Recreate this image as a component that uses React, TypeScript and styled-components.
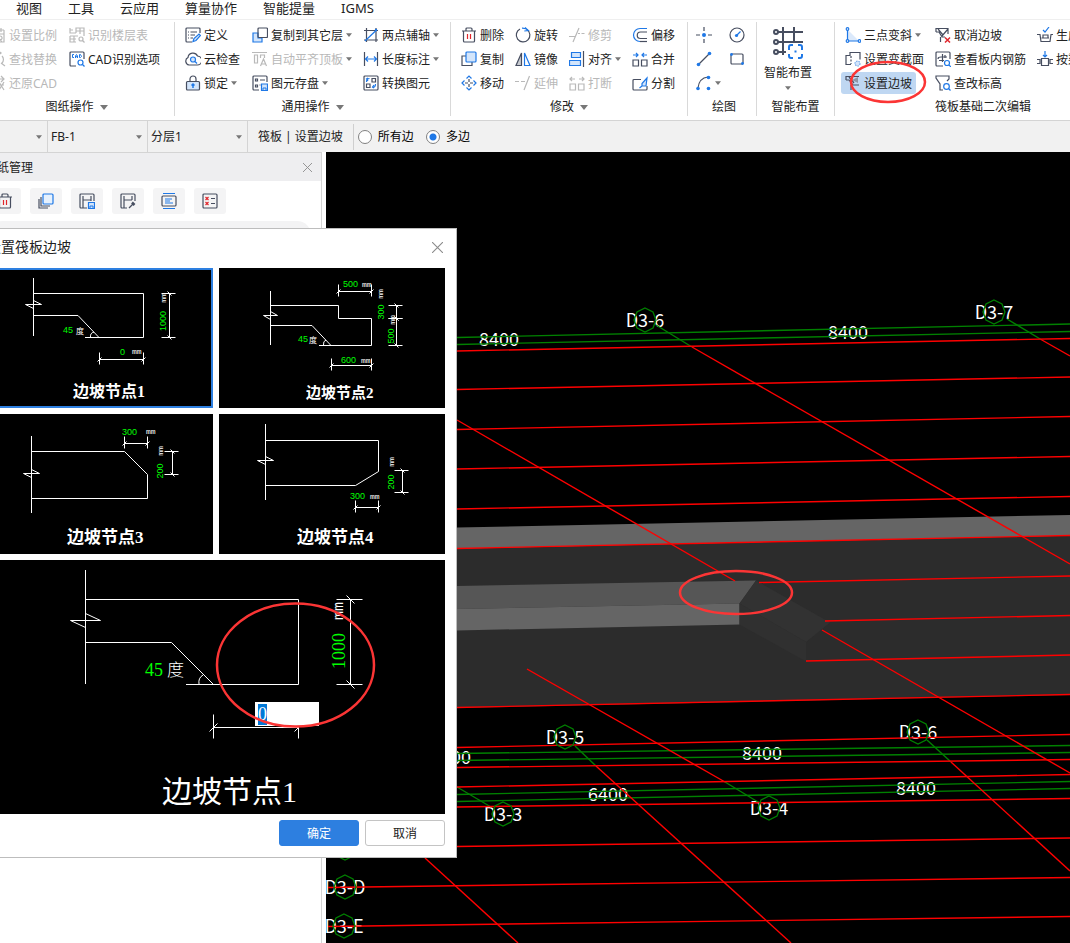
import React, { useEffect, useRef, useState } from "react";
import styled, { createGlobalStyle } from "styled-components";

const INK = "#474e60";
const BLUE = "#1f78e6";
const PALE = "#d3e5fb";
const MUTED = "#b9b9b9";
const RED = "#e0262c";
const UI_FONT = `"Noto Sans", "Noto Sans CJK SC", sans-serif`;

const GlobalStyle = createGlobalStyle`
  * { box-sizing: border-box; }
  body { margin: 0; background: #fff; overflow: hidden; }
  button, input, select { font: inherit; color: inherit; }
`;

/* ---------- shell ---------- */

const Viewport = styled.div`
  height: 100vh;
  overflow: hidden;
  font-family: ${UI_FONT};
  font-size: 12px;
  color: #222;
`;

const Shell = styled.div`
  height: 100%;
  margin-left: -25px;
  display: flex;
  flex-direction: column;
`;

const MenuBar = styled.nav`
  display: flex;
  gap: 26px;
  height: 20px;
  padding-left: 41px;
  border-bottom: 1px solid #efefef;
  flex-shrink: 0;
`;

const MenuItem = styled.button`
  border: 0;
  padding: 0;
  background: none;
  font-size: 13px;
  line-height: 16px;
  height: 16px;
  white-space: nowrap;
`;

/* ---------- ribbon ---------- */

const Ribbon = styled.div`
  display: flex;
  padding: 2px 0 4px 4px;
  border-bottom: 1px solid #d4d4d4;
  flex-shrink: 0;
`;

const Group = styled.section<{ $width: number; $pad?: number }>`
  flex: 0 0 ${(p) => p.$width}px;
  padding: 1px 0 0 ${(p) => p.$pad ?? 0}px;
  border-right: 1px solid #d9d9d9;
`;

const CommandGrid = styled.div<{ $cols: string }>`
  display: grid;
  grid-template-columns: ${(p) => p.$cols};
  grid-auto-flow: column;
  grid-template-rows: repeat(3, 24px);
  align-items: center;
  justify-items: start;
`;

const GroupLabel = styled.div<{ $pad?: number }>`
  display: flex;
  align-items: center;
  justify-content: center;
  gap: 6px;
  margin-left: -${(p) => p.$pad ?? 0}px;
  padding-top: 3px;
  line-height: 18px;
`;

const CommandButton = styled.button<{ $active?: boolean }>`
  position: relative;
  display: flex;
  align-items: center;
  gap: 3px;
  height: 22px;
  padding: 0 4px;
  border: 0;
  border-radius: 3px;
  background: ${(p) => (p.$active ? "#bfd7f2" : "none")};
  white-space: nowrap;
  &:disabled { color: #b8b8b8; }
`;

const BigButton = styled.button`
  display: flex;
  flex-direction: column;
  align-items: center;
  width: 62px;
  height: 72px;
  padding: 3px 0 0;
  border: 0;
  background: none;
  line-height: 26px;
`;

const Glyph = styled.svg`
  display: block;
  flex-shrink: 0;
  fill: none;
  stroke: ${INK};
  stroke-width: 1.2;
`;

const Triangle = styled.svg`
  display: block;
  flex-shrink: 0;
  fill: #777;
`;

const Ring = styled.svg`
  position: absolute;
  left: 8px;
  top: -12px;
  z-index: 1;
  fill: none;
  stroke: #fb3535;
  stroke-width: 2.5;
  pointer-events: none;
`;

const Caret = ({ big }: { big?: boolean }) => (
  <Triangle width={big ? 8 : 6} height={big ? 5 : 4} viewBox="0 0 8 5">
    <path d="M0 0h8L4 5z" />
  </Triangle>
);

const pen = { stroke: BLUE };
const off = { stroke: MUTED };

const icons: Record<string, React.ReactNode> = {
  scale: (
    <g {...off}>
      <path d="M1 3h13M3 1v4M7 1v3M11 1v4M14 3v4M2 7h12v8H2zM8 10l4 5M10 9a2 2 0 1 0 .1 0" />
    </g>
  ),
  find: (
    <g {...off}>
      <path d="M10 2a6 6 0 1 0-1 12M8 0l3 2-3 2M12 5a5 5 0 0 1 0 7M11 12l4 3" />
    </g>
  ),
  restore: (
    <g {...off}>
      <path d="M2 4h12M11 1l3 3-3 3M14 10H3M6 7l-4 3 4 3M9 7l5 8M14 7l-5 8" />
    </g>
  ),
  floors: (
    <g {...off}>
      <path d="M1 1v5h6M1 3h3M7 6V1h8v8M7 4h8M11 1v6M1 9v6h6M1 12h6M5 9v6M1 9h8" />
      <circle cx="12" cy="12" r="2" />
      <path d="M13.500 13.500l2 2" />
    </g>
  ),
  cad: (
    <>
      <path d="M7 15H2a1 1 0 0 1-1-1V2a1 1 0 0 1 1-1h12a1 1 0 0 1 1 1v6" />
      <path
        {...pen}
        strokeWidth="1"
        d="M5 3.500H3.500v3H5M6.500 7V5L7.500 3.500L8.500 5v2M6.500 5.700h2M10.500 3.500v3h1L12.500 5.500L11.500 3.500z"
      />
      <circle {...pen} cx="11.500" cy="11.500" r="2.500" />
      <path {...pen} d="M13.500 13.500L15.500 15.500" />
    </>
  ),
  define: (
    <>
      <path d="M15 6V2a1 1 0 0 0-1-1H2a1 1 0 0 0-1 1v12a1 1 0 0 0 1 1h5" />
      <path d="M3 5h1M5.500 5H12M3 8h1M5.500 8H10M3 11h1M5.500 11H8" />
      <path {...pen} fill={PALE} d="M8 14.500l1-3L14 7l1.500 1.500L11 13.500z" />
    </>
  ),
  cloud: (
    <>
      <path d="M4 14a4 4 0 0 1-1-7.500A5 5 0 0 1 12.500 5 4.500 4.500 0 0 1 12 14z" />
      <circle {...pen} cx="8" cy="8.500" r="2.500" fill={PALE} />
      <path {...pen} d="M10 10.500l2 2" />
    </>
  ),
  lock: (
    <>
      <path d="M5 6V4a3 3 0 0 1 6 0v2" />
      <rect x="1.500" y="6.500" width="13" height="8.500" rx="1" fill={PALE} />
      <path {...pen} strokeWidth="1.500" d="M8 13V9M6.500 10.500L8 9l1.500 1.500" />
    </>
  ),
  copyFloors: (
    <>
      <path {...pen} fill={PALE} d="M6 6H1v9h9v-4H6z" />
      <rect x="6" y="1" width="9.500" height="9.500" rx="1" />
    </>
  ),
  alignTop: (
    <g {...off}>
      <path d="M0 1.500h15M2.500 4h3v8h-3zM8.500 7V4h4v3M8.500 15l3-7 3 7M9.500 13h4" />
    </g>
  ),
  save: (
    <>
      <path d="M7 15H2a1 1 0 0 1-1-1V2a1 1 0 0 1 1-1h12a1 1 0 0 1 1 1v5M3.500 4h2v2h-2zM3.500 10h2v2h-2zM8 5h5M7.500 10h1" />
      <path {...pen} fill={PALE} d="M9.500 9h6v6.500h-6z" />
      <path {...pen} strokeWidth="1" d="M11 15v-2h3v2" />
    </>
  ),
  auxAxis: (
    <>
      <path d="M1 3.500h14M1 13h14M3.500 1v14M13 1v14" />
      <path {...pen} d="M2 14L13.500 3" />
      <circle cx="13" cy="3" r="1.200" fill={BLUE} stroke="none" />
    </>
  ),
  length: (
    <>
      <path d="M1.500 1v14M14.500 1v14" />
      <path {...pen} d="M2 8h12M5 5.500L2.500 8 5 10.500M11 5.500L13.500 8 11 10.500" />
    </>
  ),
  convert: (
    <>
      <rect x="1" y="1" width="14" height="14" rx="1" />
      <path d="M9 3.500h3.500V7H9zM3.500 9H7v3.500H3.500z" />
      <path {...pen} d="M6.500 3.500q-3 0-3 3.500M5 3l-1.500 1L5 6M9.500 12.500q3 0 3-3.500M11 13l-1.500-1L11 10" />
    </>
  ),
  trash: (
    <>
      <path d="M1 4h14M5 4V2q0-1 1-1h4q1 0 1 1v2M2.500 4v10a1 1 0 0 0 1 1h9a1 1 0 0 0 1-1V4" />
      <path stroke={RED} d="M6.500 7v5M9.500 7v5" />
    </>
  ),
  rotate: (
    <>
      <path d="M5 2a6.800 6.800 0 1 0 7 .500" />
      <path {...pen} d="M7 1.200q4-.2 6 2.300M10 0.500l3.300 3-4 .5" />
    </>
  ),
  trim: (
    <g {...off}>
      <path d="M0 9.500h6M10 1L4 15M9 6.500h2M12.500 6.500h3" />
    </g>
  ),
  offset: (
    <>
      <path d="M15 5H8.500a3 3 0 0 0 0 6.500H15" />
      <path {...pen} d="M15 1.500H8a6.500 6.500 0 0 0 0 13" />
      <path d="M8 14.500h7" />
    </>
  ),
  copy: (
    <>
      <path d="M5 5H1v9.500h10V11" />
      <rect {...pen} x="5" y="1" width="10" height="10" rx="1" fill={PALE} />
    </>
  ),
  mirror: (
    <>
      <path d="M6.500 2v12.500H1z" fill="#c9ccd2" />
      <path {...pen} d="M9.500 2v12.500H15z" />
    </>
  ),
  align: (
    <>
      <path {...pen} fill={PALE} d="M2.500 1.500h9v5h-9zM.5 9.500h11v5H.5z" />
      <path d="M14.500 0v16" />
    </>
  ),
  merge: (
    <>
      <path d="M1 9h5.500v6H1zM9.500 9H15v6H9.500z" />
      <path {...pen} d="M1 4h5M4 2l2 2-2 2M15 4h-5M12 2l-2 2 2 2" />
    </>
  ),
  move: (
    <>
      <path d="M8 4v3M8 9v3M4 8h3M9 8h3" />
      <path {...pen} d="M5.500 3.500L8 1l2.500 2.500M5.500 12.500L8 15l2.500-2.500M3.500 5.500L1 8l2.500 2.500M12.500 5.500L15 8l-2.500 2.500" />
    </>
  ),
  extend: (
    <g {...off}>
      <path d="M0 6.500h4M6 6.500h4M14.500 1L9 15M12 6.500h1" />
    </g>
  ),
  breakApart: (
    <g {...off}>
      <path d="M1 9h5.500v6H1zM9.500 9H15v6H9.500zM1 4h5M3 2L1 4l2 2M15 4h-5M13 2l2 2-2 2" />
    </g>
  ),
  split: (
    <>
      <path d="M9 4.500H2a1 1 0 0 0-1 1V14a1 1 0 0 0 1 1h12a1 1 0 0 0 1-1v-3" />
      <path {...pen} fill={PALE} d="M15 3l-5 5.500v2.500h4zM10 11l-2.500 2" />
    </>
  ),
  point: (
    <>
      <path d="M8 0v4M8 12v4M0 8h4M12 8h4" />
      <circle cx="8" cy="8" r="2" fill={BLUE} stroke="none" />
    </>
  ),
  line: (
    <>
      <path d="M3 13L13 3" />
      <g fill={BLUE} stroke="none">
        <circle cx="2.500" cy="13.500" r="1.800" />
        <circle cx="13.500" cy="2.500" r="1.800" />
      </g>
    </>
  ),
  arc: (
    <>
      <path d="M2 13Q3 3 12 2" />
      <g fill={BLUE} stroke="none">
        <circle cx="2" cy="13.500" r="1.800" />
        <circle cx="12.500" cy="2.500" r="1.800" />
        <circle cx="12.500" cy="13.500" r="1.800" />
      </g>
    </>
  ),
  circle: (
    <>
      <circle cx="8" cy="8" r="7" />
      <path {...pen} d="M8 8l3.500-3.500" />
      <circle cx="7.500" cy="8.500" r="1.600" fill={BLUE} stroke="none" />
    </>
  ),
  rect: (
    <>
      <rect x="2" y="3" width="12" height="10" rx="1" />
      <circle cx="2.500" cy="3.500" r="1.400" fill={BLUE} stroke="none" />
      <circle cx="13.500" cy="12.500" r="1.400" fill={BLUE} stroke="none" />
    </>
  ),
  slope: (
    <>
      <path d="M3 3l11 11H3z" fill="#dbe9fb" stroke="none" />
      <path {...pen} d="M2.500 2v12H15" />
      <g fill="#fff" {...pen}>
        <circle cx="2.500" cy="2" r="1.300" />
        <circle cx="2.500" cy="14" r="1.300" />
        <circle cx="14.500" cy="14" r="1.300" />
      </g>
    </>
  ),
  section: (
    <>
      <path d="M6 13.500H1V4.500h4V1.500h10v7" />
      <path d="M6 5v8" strokeDasharray="2 1.500" />
      <circle cx="12.500" cy="12.500" r="2.500" fill={PALE} stroke="#6da4e8" strokeDasharray="1.500 1" />
    </>
  ),
  edge: (
    <>
      <path d="M1 5V1.500h13M1 5h3l4 5h6M6 15v-5M4 2l5 6" />
      <path d="M7 5l6-3v6z" fill="#8e96a6" stroke="none" />
    </>
  ),
  cancelEdge: (
    <>
      <path d="M1 5V1.500h12V7M1 5h3l3 5h3M5.500 15v-5M3 2l5 6M13 2L7 9" />
      <path stroke={RED} strokeWidth="1.500" d="M10 10.500l5 5M15 10.500l-5 5" />
    </>
  ),
  viewRebar: (
    <>
      <path d="M8 15H2a1 1 0 0 1-1-1V2a1 1 0 0 1 1-1h12a1 1 0 0 1 1 1v6M3 8q0-2 3-2h6M7.500 3v8M4 9.500h5M10 4v3" />
      <circle {...pen} cx="12" cy="12" r="2.500" />
      <path {...pen} d="M14 14l2 2" />
    </>
  ),
  level: (
    <>
      <path d="M8 15H5V9L1 3V1h13v3L12 6" />
      <circle {...pen} cx="11.500" cy="11.500" r="2.800" />
      <path {...pen} d="M13.500 13.500L15.500 15.500" />
    </>
  ),
  pit: (
    <>
      <path d="M0 7.500h3L4 14.500h9l1-7h2M4.500 11h7.500M6 11V8h5v3" />
      <path {...pen} d="M6 3l2 2 4-5" />
    </>
  ),
  byBeam: (
    <>
      <path d="M0 8.500h3v4H0M16 8.500h-3v4h3M4.500 7.500h7v7h-7z" />
      <path {...pen} d="M8 0v6M6 4l2 2 2-2" />
    </>
  ),
  stack: (
    <>
      <path d="M1 6v9h9M3 4v9h9" />
      <rect {...pen} x="5" y="1" width="10" height="10" rx="1" fill="#e6f1fd" />
    </>
  ),
  saveSheet: (
    <>
      <path d="M8 15H2a1 1 0 0 1-1-1V2a1 1 0 0 1 1-1h12a1 1 0 0 1 1 1v6M4 3v12M4 7h8M12 3v5" />
      <path {...pen} fill={PALE} d="M9.500 9.500h6v6h-6z" />
      <path {...pen} strokeWidth="1" d="M11 15v-2h3v2" />
    </>
  ),
  pickSheet: (
    <>
      <path d="M7 15H2a1 1 0 0 1-1-1V2a1 1 0 0 1 1-1h12a1 1 0 0 1 1 1v6M4 3v12M4 7h8M12 3v4" />
      <path d="M9 15l4-4" />
      <path d="M12 9.500l2.500 2.500" strokeWidth="2.500" />
    </>
  ),
  bound: (
    <>
      <path {...pen} d="M2 .500h12M2 15.500h12M4 6h7M4 8h5M4 10h8" />
      <rect x="1" y="3" width="14" height="10" rx="1" />
    </>
  ),
  checks: (
    <>
      <rect x="1" y="1" width="14" height="14" rx="1" />
      <path d="M9 5.500h4M9 10.500h4" />
      <path stroke={RED} d="M3.500 4l3 3M6.500 4l-3 3M3.500 9l3 3M6.500 9l-3 3" />
    </>
  ),
};

const Icon = ({ name }: { name: string }) => (
  <Glyph width="16" height="16" viewBox="0 0 16 16" aria-hidden="true">
    {icons[name]}
  </Glyph>
);

type Command = {
  icon: string;
  text?: string;
  menu?: boolean;
  disabled?: boolean;
  active?: boolean;
  label?: string;
};

const c = (icon: string, text: string, extra: Partial<Command> = {}): Command => ({ icon, text, ...extra });
const disabled = { disabled: true };
const menu = { menu: true };

const sheetCommands = [
  c("scale", "设置比例", disabled),
  c("find", "查找替换", disabled),
  c("restore", "还原CAD", disabled),
  c("floors", "识别楼层表", disabled),
  c("cad", "CAD识别选项"),
];
const commonCommands = [
  c("define", "定义"),
  c("cloud", "云检查"),
  c("lock", "锁定", menu),
  c("copyFloors", "复制到其它层", menu),
  c("alignTop", "自动平齐顶板", { menu: true, disabled: true }),
  c("save", "图元存盘", menu),
  c("auxAxis", "两点辅轴", menu),
  c("length", "长度标注", menu),
  c("convert", "转换图元"),
];
const modifyCommands = [
  c("trash", "删除"),
  c("copy", "复制"),
  c("move", "移动"),
  c("rotate", "旋转"),
  c("mirror", "镜像"),
  c("extend", "延伸", disabled),
  c("trim", "修剪", disabled),
  c("align", "对齐", menu),
  c("breakApart", "打断", disabled),
  c("offset", "偏移"),
  c("merge", "合并"),
  c("split", "分割"),
];
const drawCommands: Command[] = [
  { icon: "point", label: "点" },
  { icon: "line", label: "直线" },
  { icon: "arc", label: "弧", menu: true },
  { icon: "circle", label: "圆" },
  { icon: "rect", label: "矩形" },
];
const raftCommands = [
  c("slope", "三点变斜", menu),
  c("section", "设置变截面"),
  c("edge", "设置边坡", { active: true }),
  c("cancelEdge", "取消边坡"),
  c("viewRebar", "查看板内钢筋"),
  c("level", "查改标高"),
  c("pit", "生成土方"),
  c("byBeam", "按梁分割"),
];

const Commands = ({ items, cols }: { items: Command[]; cols: string }) => (
  <CommandGrid $cols={cols}>
    {items.map((it) => (
      <CommandButton key={it.icon} disabled={it.disabled} $active={it.active} aria-label={it.label}>
        <Icon name={it.icon} />
        {it.text}
        {it.menu && <Caret />}
        {it.active && (
          <Ring width="78" height="44">
            <ellipse cx="39" cy="22" rx="37" ry="20" />
          </Ring>
        )}
      </CommandButton>
    ))}
  </CommandGrid>
);

/* ---------- option bar ---------- */

const OptionBar = styled.div`
  display: flex;
  align-items: center;
  height: 31px;
  background: #f1f1f1;
  flex-shrink: 0;
`;

const Combo = styled.label<{ $width: number }>`
  display: flex;
  align-items: center;
  width: ${(p) => p.$width}px;
  height: 100%;
  padding-right: 5px;
  border-right: 1px solid #d4d4d4;
  select {
    appearance: none;
    flex: 1;
    min-width: 0;
    height: 100%;
    border: 0;
    padding: 0 3px;
    background: none;
    outline: none;
  }
`;

const Crumb = styled.div`
  height: 26px;
  line-height: 26px;
  padding: 0 10px;
  border-right: 1px solid #cfcfcf;
  white-space: nowrap;
`;

const Choice = styled.label`
  display: flex;
  align-items: center;
  gap: 6px;
  margin-right: 8px;
  padding-left: 4px;
  line-height: 26px;
  white-space: nowrap;
  color: #000;
  input {
    appearance: none;
    width: 14px;
    height: 14px;
    margin: 0;
    border: 1px solid #808080;
    border-radius: 50%;
    background: #fff;
  }
  input:checked {
    background: radial-gradient(circle, ${BLUE} 0 3px, #fff 4px);
  }
`;

/* ---------- work area ---------- */

const Workspace = styled.main`
  position: relative;
  display: flex;
  flex: 1;
  min-height: 0;
  gap: 4px;
`;

const SidePanel = styled.aside`
  flex: 0 0 347px;
  border: solid #d4d4d4;
  border-width: 1px 1px 0 0;
`;

const PanelHeader = styled.header`
  display: flex;
  align-items: center;
  justify-content: space-between;
  height: 28px;
  padding: 0 8px 0 10px;
  background: #eeeef0;
`;

const CloseButton = styled.button`
  display: grid;
  place-items: center;
  padding: 0;
  width: 12px;
  height: 12px;
  border: 0;
  background: none;
  stroke: #8b8b8b;
`;

const PanelTools = styled.div`
  display: flex;
  gap: 9px;
  padding: 7px 0 7px 14px;
`;

const ToolButton = styled.button`
  display: grid;
  place-items: center;
  width: 32px;
  height: 26px;
  padding: 0;
  border: 0;
  border-radius: 3px;
  background: #f4f4f5;
`;

const SearchBox = styled.input`
  display: block;
  width: 322px;
  height: 28px;
  margin-left: 14px;
  border: 0;
  border-radius: 14px;
  background: #f3f3f4;
`;

const Scene = styled.svg`
  flex: 1;
  min-width: 0;
  min-height: 0;
  background: #000;
  font-family: "Noto Sans CJK SC", sans-serif;
  font-size: 18px;
`;

const CloseMark = ({ size }: { size: number }) => (
  <svg width={size} height={size} viewBox="0 0 10 10">
    <path d="M0 0l10 10M10 0L0 10" />
  </svg>
);

type Seg = [number, number, number, number];

const redLines: Seg[] = [
  [457, 351, 1070, 338.5],
  [457, 389.500, 1070, 377],
  [457, 429.500, 1070, 416.500],
  [457, 469, 1070, 456.500],
  [457, 509, 1070, 496.500],
  [457, 548.500, 1070, 535.500],
  [759, 582.500, 1070, 576],
  [825, 621, 1070, 615.500],
  [806, 661, 1070, 655],
  [457, 707.500, 1070, 694.500],
  [457, 747.500, 1070, 734.500],
  [457, 767.500, 1070, 759.500],
  [457, 787, 1070, 774.500],
  [457, 807, 1070, 798.500],
  [457, 846.500, 1070, 838],
  [328, 887.500, 1070, 877.500],
  [328, 926.500, 1070, 916.500],
  [692, 347, 1070, 564],
  [457, 420, 735, 581],
  [1041, 339.500, 1070, 356],
  [822, 630, 1070, 773],
  [527, 669, 725, 782],
  [596, 766, 791, 943],
  [951, 762, 1070, 871],
  [425, 858, 518, 943],
];

const greenLines: Seg[] = [
  [457, 337.500, 1070, 324],
  [457, 344.500, 1070, 331.500],
  [457, 753.500, 1070, 745.500],
  [457, 760.500, 1070, 752.500],
  [457, 794.500, 1070, 781.500],
  [457, 801.500, 1070, 788.500],
  [656, 325, 692, 347],
  [1007, 319, 1041, 339.500],
  [725, 782, 758, 802],
  [575, 746, 596, 766],
  [927, 740, 951, 762],
  [457, 787, 491, 807],
];

const axes: [string, number, number][] = [
  ["D3-6", 645, 320],
  ["D3-7", 994, 312],
  ["D3-5", 565, 737],
  ["D3-6", 918, 732],
  ["D3-3", 503, 814],
  ["D3-4", 769, 808],
  ["D3-D", 345, 887],
  ["D3-E", 344, 926],
  ["D3-C", 345, 848],
];

const spans: [string, number, number][] = [
  ["8400", 499, 346],
  ["8400", 848, 339],
  ["8400", 762, 760],
  ["8400", 916, 795],
  ["6400", 608, 801],
  ["8400", 451, 764],
];

const Lines = ({ segs, color }: { segs: Seg[]; color: string }) => (
  <g stroke={color} strokeWidth="1.400">
    {segs.map(([x1, y1, x2, y2], i) => (
      <line key={i} x1={x1} y1={y1} x2={x2} y2={y2} />
    ))}
  </g>
);

const ModelView = () => (
  <Scene viewBox="326 152 744 791" preserveAspectRatio="xMinYMin slice" role="img" aria-label="三维视图">
    <path d="M457 527.500L1070 515v21L457 549z" fill="#656565" />
    <path d="M457 549L1070 536v159L457 708z" fill="#2c2c2c" />
    <path d="M457 586L756 580.500L739.500 603.500L457 609z" fill="#565656" />
    <path d="M457 609L739.500 603.500v21L457 630.500z" fill="#656565" />
    <path d="M756 580.500L830 622.500L806 642L739.500 603.500z" fill="#323232" />
    <path d="M739.500 603.500L806 642v19.500L739.500 624.500z" fill="#303030" />
    <g fill="#fff" textAnchor="middle">
      {axes.map(([t, x, y]) => (
        <text key={t + x} x={x} y={y + 7}>{t}</text>
      ))}
      {spans.map(([t, x, y]) => (
        <text key={t + x} x={x} y={y}>{t}</text>
      ))}
    </g>
    <Lines segs={greenLines} color="#008000" />
    <Lines segs={redLines} color="#ff0000" />
    <g fill="none" stroke="#008000" strokeWidth="1.300">
      {axes.map(([t, x, y]) => (
        <path key={t + x} d={`M${x} ${y - 12}l8 4l3 8l-3 8l-8 4l-8 -4l-3 -8l3 -8z`} />
      ))}
    </g>
    <ellipse cx="736" cy="592.500" rx="56" ry="21.500" fill="none" stroke="#fb3535" strokeWidth="2.500" />
  </Scene>
);

/* ---------- slope dialog ---------- */

const Dialog = styled.section`
  position: absolute;
  left: 0;
  top: 76px;
  width: 482px;
  padding: 0 11px 11px;
  border: 1px solid #bdbdbd;
  background: #fff;
`;

const DialogHeader = styled.header`
  display: flex;
  align-items: center;
  justify-content: space-between;
  height: 39px;
  padding: 0 2px 3px 0;
  h2 { margin: 0; font-size: 14px; line-height: 18px; font-weight: 400; }
`;

const NodeGrid = styled.div`
  display: grid;
  grid-template-columns: 1fr 1fr;
  gap: 6px;
`;

const NodeButton = styled.button<{ $selected: boolean }>`
  padding: 0;
  border: 0;
  background: #000;
  outline: ${(p) => (p.$selected ? "2px solid #2d7fe0" : "none")};
  outline-offset: -2px;
`;

const Drawing = styled.svg`
  display: block;
  width: 100%;
  fill: none;
  stroke: #fff;
  stroke-width: 1;
`;

const Preview = styled.div`
  position: relative;
  grid-column: 1 / -1;
  background: #000;
`;

const ValueInput = styled.input`
  position: absolute;
  left: 268px;
  top: 142px;
  width: 64px;
  height: 24px;
  padding: 0 3px;
  border: 0;
  outline: 0;
  background: #fff;
  color: #000;
  font-family: "Liberation Serif", serif;
  font-size: 18px;
  line-height: 18px;
  &::selection { background: #0078d7; color: #fff; }
`;

const PreviewMark = styled.svg`
  position: absolute;
  left: 228px;
  top: 40px;
  fill: none;
  stroke: #fb3535;
  stroke-width: 2.5;
  pointer-events: none;
`;

const Footer = styled.footer`
  display: flex;
  justify-content: flex-end;
  gap: 6px;
  padding-top: 6px;
`;

const DialogButton = styled.button<{ $primary?: boolean }>`
  width: 80px;
  height: 26px;
  padding: 0;
  border: 1px solid ${(p) => (p.$primary ? "#2d7fe0" : "#c4c4c4")};
  border-radius: 3px;
  background: ${(p) => (p.$primary ? "#2d7fe0" : "#fff")};
  color: ${(p) => (p.$primary ? "#fff" : "#222")};
`;

const Label = styled.text<{ $size: number; $green?: boolean }>`
  font-family: "Liberation Mono", "Noto Sans CJK SC", monospace;
  font-size: ${(p) => p.$size}px;
  fill: ${(p) => (p.$green ? "#00ff00" : "#fff")};
  stroke: none;
`;

const NumberLabel = styled(Label)`
  font-family: "Liberation Sans", sans-serif;
`;

const SerifLabel = styled(Label)`
  font-family: "Liberation Serif", "Noto Sans CJK SC", serif;
  font-weight: 300;
`;

const Title = styled.text<{ $size: number }>`
  font-family: "Liberation Serif", "Noto Sans CJK SC", serif;
  font-size: ${(p) => p.$size}px;
  font-weight: ${(p) => (p.$size > 20 ? 400 : 700)};
  fill: #fff;
  stroke: none;
`;

const Break = ({ x, y, w = 8, h = 4 }: { x: number; y: number; w?: number; h?: number }) => (
  <path d={`M${x} ${y - h}L${x + w} ${y}H${x - w}L${x} ${y + h}`} />
);

const DimH = ({ x1, x2, y, t = 5, s = 2 }: { x1: number; x2: number; y: number; t?: number; s?: number }) => (
  <path
    d={`M${x1} ${y}H${x2}M${x1} ${y - t - 2}V${y + t}M${x2} ${y - t - 2}V${y + t}M${x1 - s} ${y + s}l${2 * s} ${-2 * s}M${x2 - s} ${y + s}l${2 * s} ${-2 * s}`}
  />
);

const DimV = ({ x, y1, y2, t = 6, s = 2 }: { x: number; y1: number; y2: number; t?: number; s?: number }) => (
  <path
    d={`M${x} ${y1}V${y2}M${x - t - 2} ${y1}H${x + t}M${x - t - 2} ${y2}H${x + t}M${x - s} ${y1 - s}l${2 * s} ${2 * s}M${x - s} ${y2 - s}l${2 * s} ${2 * s}`}
  />
);

const Num = ({ x, y, children }: { x: number; y: number; children: string }) => (
  <NumberLabel $size={9} $green x={x} y={y}>{children}</NumberLabel>
);
const Unit = ({ x, y, children = "mm" }: { x: number; y: number; children?: string }) => (
  <Label $size={8} x={x} y={y}>{children}</Label>
);
const Upright = ({ x, y, children, green }: { x: number; y: number; children: string; green?: boolean }) => {
  const Tag = green ? NumberLabel : Label;
  return (
    <Tag $size={green ? 9 : 8} $green={green} textAnchor="middle" transform={`translate(${x + 3} ${y}) rotate(-90)`}>
      {children}
    </Tag>
  );
};

const nodes = [
  {
    name: "边坡节点1",
    box: "-13 268 226 140",
    title: [73, 397, 16],
    art: (
      <>
        <path d="M33.500 278v58M33.500 293.500H143.500v44H85M33.500 315.500H78l21 22M94 332q-4 1-3.500 5" />
        <Break x={33.5} y={304.5} />
        <DimV x={169.5} y1={293.5} y2={337.5} />
        <DimH x1={99.5} x2={143.5} y={359.5} />
        <Num x={63} y={333}>45</Num>
        <Unit x={76} y={334}>度</Unit>
        <Num x={120} y={355}>0</Num>
        <Unit x={132} y={354} />
        <Upright x={163} y={321} green>1000</Upright>
        <Upright x={163} y={298}>mm</Upright>
      </>
    ),
  },
  {
    name: "边坡节点2",
    box: "219 268 226 140",
    title: [306, 398, 15],
    art: (
      <>
        <path d="M270.500 291v54M270.500 305.500h68v13h33v27H319M270.500 325.500H312l19 20M326 340q-3 1-2.500 5" />
        <Break x={270.5} y={315.5} w={7} />
        <DimH x1={338.5} x2={371.5} y={291.5} />
        <DimV x={396.5} y1={305.5} y2={318.5} />
        <DimV x={396.5} y1={318.5} y2={345.5} />
        <DimH x1={331.5} x2={371.5} y={365.5} />
        <Num x={343} y={287}>500</Num>
        <Unit x={362} y={287} />
        <Upright x={380} y={294}>mm</Upright>
        <Upright x={381} y={312} green>300</Upright>
        <Upright x={392} y={320}>mm</Upright>
        <Upright x={391} y={336} green>500</Upright>
        <Num x={298} y={342}>45</Num>
        <Unit x={309} y={343}>度</Unit>
        <Num x={341} y={363}>600</Num>
        <Unit x={361} y={363} />
      </>
    ),
  },
  {
    name: "边坡节点3",
    box: "-13 414 226 140",
    title: [67, 543, 17],
    art: (
      <>
        <path d="M31.500 436v77M31.500 451.500h93l23 23v24h-116" />
        <Break x={31.5} y={473.5} />
        <DimH x1={124.5} x2={147.5} y={443.5} />
        <DimV x={172.5} y1={451.5} y2={474.5} />
        <Num x={122} y={435}>300</Num>
        <Unit x={146} y={434} />
        <Upright x={160} y={471} green>200</Upright>
        <Upright x={160} y={451}>mm</Upright>
      </>
    ),
  },
  {
    name: "边坡节点4",
    box: "219 414 226 140",
    title: [297, 543, 17],
    art: (
      <>
        <path d="M265.500 424v76M265.500 440.500h113v31l-23 14h-90" />
        <Break x={265.5} y={460.5} />
        <DimV x={402.5} y1={470.5} y2={492.5} />
        <DimH x1={355.5} x2={378.5} y={507.5} />
        <Num x={350} y={499}>300</Num>
        <Unit x={370} y={499} />
        <Upright x={391} y={482} green>200</Upright>
        <Upright x={391} y={462}>mm</Upright>
      </>
    ),
  },
];

const SlopeDialog = () => {
  const [selected, setSelected] = useState(0);
  const [value, setValue] = useState("0");
  const field = useRef<HTMLInputElement>(null);

  useEffect(() => {
    field.current?.focus();
    field.current?.select();
  }, []);

  return (
    <Dialog role="dialog" aria-labelledby="slope-title">
      <DialogHeader>
        <h2 id="slope-title">设置筏板边坡</h2>
        <CloseButton aria-label="关闭对话框">
          <CloseMark size={11} />
        </CloseButton>
      </DialogHeader>
      <NodeGrid>
        {nodes.map((n, i) => (
          <NodeButton key={n.name} $selected={i === selected} onClick={() => setSelected(i)}>
            <Drawing viewBox={n.box}>
              {n.art}
              <Title x={n.title[0]} y={n.title[1]} $size={n.title[2]}>{n.name}</Title>
            </Drawing>
          </NodeButton>
        ))}
        <Preview>
          <Drawing viewBox="-13 560 458 254">
            <path d="M85.500 570v114M85.500 599.500h213v85H186M85.500 642.500h86l42 42M203 675q-5 3-4 9" />
            <Break x={85.5} y={620.5} w={15} h={7} />
            <DimV x={350.5} y1={599.5} y2={684.5} t={12} s={4} />
            <DimH x1={213.5} x2={298.5} y={727.5} t={11} s={4} />
            <SerifLabel $size={18} $green x={145} y={676}>45</SerifLabel>
            <SerifLabel $size={17} x={167} y={676}>度</SerifLabel>
            <SerifLabel $size={18} $green textAnchor="middle" transform="translate(345 651) rotate(-90)">
              1000
            </SerifLabel>
            <Label $size={15} textAnchor="middle" transform="translate(343 611) rotate(-90)">
              mm
            </Label>
            <Title $size={30} x={162} y={802}>边坡节点1</Title>
          </Drawing>
          <ValueInput
            ref={field}
            aria-label="边坡宽度"
            value={value}
            onChange={(e) => setValue(e.target.value)}
          />
          <PreviewMark width="161" height="130">
            <ellipse cx="80.500" cy="65" rx="78.500" ry="61.500" />
          </PreviewMark>
        </Preview>
      </NodeGrid>
      <Footer>
        <DialogButton $primary>确定</DialogButton>
        <DialogButton>取消</DialogButton>
      </Footer>
    </Dialog>
  );
};

/* ---------- page ---------- */

const panelTools: [string, string][] = [
  ["trash", "删除图纸"],
  ["stack", "复制图纸"],
  ["saveSheet", "保存图纸"],
  ["pickSheet", "定位图纸"],
  ["bound", "分割图纸"],
  ["checks", "图纸列表"],
];

export default function App() {
  const [scope, setScope] = useState("multi");
  return (
    <Viewport>
      <GlobalStyle />
      <Shell>
        <MenuBar>
          {["视图", "工具", "云应用", "算量协作", "智能提量", "IGMS"].map((m) => (
            <MenuItem key={m}>{m}</MenuItem>
          ))}
        </MenuBar>

        <Ribbon>
          <Group $width={196} $pad={7}>
            <Commands items={sheetCommands} cols="79px 1fr" />
            <GroupLabel $pad={7}>图纸操作<Caret big /></GroupLabel>
          </Group>
          <Group $width={276} $pad={6}>
            <Commands items={commonCommands} cols="67px 111px 1fr" />
            <GroupLabel $pad={6}>通用操作<Caret big /></GroupLabel>
          </Group>
          <Group $width={237} $pad={6}>
            <Commands items={modifyCommands} cols="54px 54px 63px 1fr" />
            <GroupLabel $pad={6}>修改<Caret big /></GroupLabel>
          </Group>
          <Group $width={69} $pad={4}>
            <Commands items={drawCommands} cols="33px 1fr" />
            <GroupLabel>绘图</GroupLabel>
          </Group>
          <Group $width={78}>
            <BigButton>
              <Glyph width="32" height="34" viewBox="0 0 32 34" aria-hidden="true">
                <g strokeWidth="2">
                  <path d="M6 6h25M6 16h25M6 26h8M11 1v28M22 1v15" />
                  <circle cx="4" cy="6" r="2" fill="#fff" />
                  <circle cx="4" cy="16" r="2" fill="#fff" />
                  <circle cx="4" cy="26" r="2" fill="#fff" />
                </g>
                <g stroke={BLUE} strokeWidth="2">
                  <path d="M17 24v-3q0-2 2-2h2M26 19h2q2 0 2 2v3M30 28v2q0 2-2 2h-2M21 32h-2q-2 0-2-2v-2M22.500 25.500h2" />
                </g>
              </Glyph>
              <span>智能布置</span>
              <Caret />
            </BigButton>
            <GroupLabel>智能布置</GroupLabel>
          </Group>
          <Group $width={297} $pad={6}>
            <Commands items={raftCommands} cols="90px 102px 1fr" />
            <GroupLabel $pad={6}>筏板基础二次编辑</GroupLabel>
          </Group>
        </Ribbon>

        <OptionBar>
          <Combo $width={73}>
            <select aria-label="构件类型" defaultValue="">
              <option value=""></option>
            </select>
            <Caret />
          </Combo>
          <Combo $width={100}>
            <select aria-label="构件">
              <option>FB-1</option>
            </select>
            <Caret />
          </Combo>
          <Combo $width={100}>
            <select aria-label="分层">
              <option>分层1</option>
            </select>
            <Caret />
          </Combo>
          <Crumb>筏板 | 设置边坡</Crumb>
          <Choice>
            <input type="radio" name="scope" checked={scope === "all"} onChange={() => setScope("all")} />
            所有边
          </Choice>
          <Choice>
            <input type="radio" name="scope" checked={scope === "multi"} onChange={() => setScope("multi")} />
            多边
          </Choice>
        </OptionBar>

        <Workspace>
          <SidePanel>
            <PanelHeader>
              图纸管理
              <CloseButton aria-label="关闭面板">
                <CloseMark size={9} />
              </CloseButton>
            </PanelHeader>
            <PanelTools>
              {panelTools.map(([icon, label]) => (
                <ToolButton key={icon} aria-label={label}>
                  <Icon name={icon} />
                </ToolButton>
              ))}
            </PanelTools>
            <SearchBox aria-label="搜索图纸" />
          </SidePanel>
          <ModelView />
          <SlopeDialog />
        </Workspace>
      </Shell>
    </Viewport>
  );
}
